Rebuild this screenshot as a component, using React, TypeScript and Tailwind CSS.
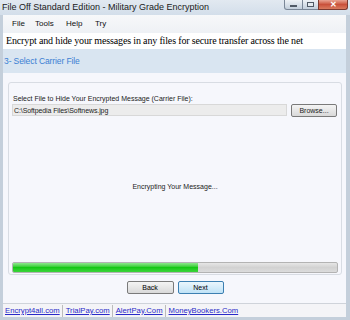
export default function App() {
  const links = ['Encrypt4all.com', 'TrialPay.com', 'AlertPay.Com', 'MoneyBookers.Com']

  return (
    <div className="w-[350px] h-[320px] overflow-hidden bg-[#c4cfdb] flex flex-col font-['Liberation_Sans',sans-serif] text-black">
      {/* title bar */}
      <div className="h-[15px] flex items-start bg-gradient-to-b from-[#e2e9f1] to-[#d3deea]">
        <span className="pl-[2px] pt-[1px] text-[9px] leading-[12px] text-[#1a1a1a] whitespace-nowrap">
          File Off Standard Edition - Military Grade Encryption
        </span>
        <div className="ml-auto flex mr-[2px]">
          <div className="w-[19px] h-[10px] rounded-bl-[3px] border border-t-0 border-[#7a8797] bg-gradient-to-b from-[#eef2f6] to-[#c3cfdc] flex items-center justify-center">
            <div className="w-[7px] h-[2px] bg-white border-[0.5px] border-[#505a66] mt-[2px]" />
          </div>
          <div className="w-[15px] h-[10px] border-b border-[#7a8797] bg-gradient-to-b from-[#eef2f6] to-[#c3cfdc] flex items-center justify-center">
            <div className="w-[7px] h-[5px] border border-[#505a66] bg-[#e4eaf0]" />
          </div>
          <div className="w-[30px] h-[10px] rounded-br-[3px] border border-t-0 border-[#7b3a30] bg-gradient-to-b from-[#e8a493] via-[#c9513b] to-[#d97a5e] flex items-center justify-center text-white font-bold text-[8px] leading-none">
            ✕
          </div>
        </div>
      </div>

      {/* client area */}
      <div className="flex-1 flex flex-col ml-[3px] mr-[4px] mb-[3px] bg-[#f0f0f0]">
        {/* menu */}
        <div className="h-[18px] flex items-center bg-gradient-to-b from-[#f7f8fa] to-[#eef1f5] text-[8px] leading-none text-[#111]">
          <span className="ml-[9px] w-[23px]">File</span>
          <span className="w-[31px]">Tools</span>
          <span className="w-[29px]">Help</span>
          <span>Try</span>
        </div>

        {/* heading */}
        <div className="h-[16px] bg-white flex items-center pl-[3px] font-['Liberation_Serif',serif] text-[10px] tracking-[-0.15px] leading-none whitespace-nowrap">
          Encrypt and hide your messages in any files for secure transfer across the net
        </div>

        {/* step band */}
        <div className="h-[24px] bg-[#d9e5f1] flex items-center pl-[1px] text-[#3b80d3] text-[8.5px] tracking-[-0.1px] leading-none">
          3- Select Carrier File
        </div>

        {/* panel */}
        <div className="flex-1 bg-[#f6f7fc] pt-[9px] pl-[5px] pr-[4px] flex flex-col">
          <div className="h-[193px] border border-[#d8dce3] rounded-[3px] flex flex-col pl-[3px] pr-[3px] pt-[11px] pb-[1px] text-[7px] text-[#222]">
            <div className="leading-[9px] pl-[1px]">
              Select File to Hide Your Encrypted Message (Carrier File):
            </div>
            <div className="flex items-start mt-[1px] h-[13px]">
              <div className="w-[275px] h-[12px] bg-[#ececec] border border-[#d8d8d8] flex items-center pl-[1px] tracking-[-0.1px] leading-none">
                C:\Softpedia Files\Softnews.jpg
              </div>
              <div className="ml-[4px] w-[46px] h-[13px] border border-[#7a7a7a] rounded-[2px] bg-gradient-to-b from-[#f4f4f4] to-[#d9d9d9] flex items-center justify-center leading-none">
                Browse...
              </div>
            </div>
            <div className="flex-1 flex items-center justify-center leading-none pb-[6px]">
              Encrypting Your Message...
            </div>
            <div className="h-[11px] rounded-[2px] border border-[#b3b3b3] bg-gradient-to-b from-[#e6e6e6] via-[#d2d2d2] to-[#dcdcdc] flex overflow-hidden">
              <div className="w-[185px] h-full bg-gradient-to-b from-[#8ae88a] via-[#14c814] to-[#3ad43a]" />
            </div>
          </div>

          <div className="flex justify-center gap-[4px] mt-[6px] text-[7px] leading-none">
            <div className="w-[47px] h-[13px] border border-[#7a7a7a] rounded-[2px] bg-gradient-to-b from-[#f4f4f4] to-[#d9d9d9] flex items-center justify-center">
              Back
            </div>
            <div className="w-[46px] h-[13px] border border-[#3c7fb1] rounded-[2px] bg-gradient-to-b from-[#eaf6fd] to-[#bfe2f6] flex items-center justify-center">
              Next
            </div>
          </div>
        </div>

        {/* footer links */}
        <div className="h-[14px] bg-[#f4f4f7] border-t border-[#cfd3da] flex items-center text-[7.7px] leading-none">
          {links.map((l, i) => (
            <span key={l} className={i > 0 ? 'border-l border-[#bcbcbc] ml-[2px] pl-[3px] h-[12px] flex items-center' : 'ml-[2px] h-[12px] flex items-center'}>
              <span className="text-[#2a2ac8] underline">{l}</span>
            </span>
          ))}
        </div>
      </div>
    </div>
  )
}
